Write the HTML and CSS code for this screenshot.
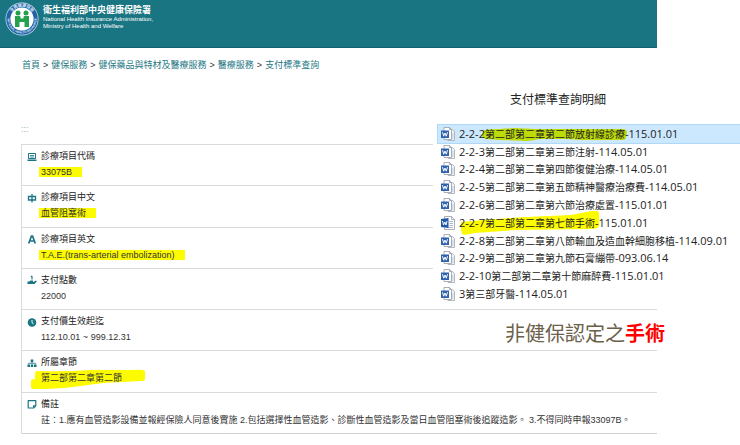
FILE: index.html
```html
<!DOCTYPE html>
<html lang="zh-Hant">
<head>
<meta charset="utf-8">
<meta name="viewport" content="width=device-width, initial-scale=1">
<title>支付標準查詢明細</title>
<link rel="stylesheet" href="styles.css">
</head>
<body>
<svg width="0" height="0" class="defs" aria-hidden="true">
  <symbol id="word-doc" viewBox="0 0 14 14">
    <path d="M7 2.500h4.500l2 2v9H7z" fill="#eef1f5" stroke="#a3a9b2" stroke-width=".8"/>
    <path d="M9.500 7h3M9.500 9h3M9.500 11h3" stroke="#b4bac4" stroke-width=".8"/>
    <path d="M3 .5h5.500l2 2v10H3z" fill="#fff" stroke="#949ca8" stroke-width=".8"/>
    <path d="M8.500.5v2h2" fill="none" stroke="#949ca8" stroke-width=".8"/>
    <path d="M0 3.500h8v7.500H0z" fill="#2f62ae"/>
    <path d="M1.500 5.200l1.200 4L4 6l1.300 3.200 1.200-4" fill="none" stroke="#fff" stroke-width="1"/>
  </symbol>
  <symbol id="word-page" viewBox="0 0 14 14">
    <path d="M3.500.5h7l3 3v10h-10z" fill="#fff" stroke="#949ca8" stroke-width=".8"/>
    <path d="M10.500.5v3h3M8.500 5.500h3.500M8.500 7.500h3.500M8.500 9.500h3.500M6 11.500h6" fill="none" stroke="#9aa5b8" stroke-width=".8"/>
    <path d="M0 3l7.500-1v10L0 11z" fill="#2259a8"/>
    <path d="M1.500 5l1 4L3.800 6 5 9l1-4" fill="none" stroke="#fff" stroke-width="1"/>
  </symbol>
</svg>

<div class="page">
  <header class="site-header">
    <svg class="logo" viewBox="0 0 34 34" aria-hidden="true">
      <defs>
        <path id="arc-top" d="M4.700 17a12.300 12.300 0 0 1 24.600 0"/>
        <path id="arc-bottom" d="M2.500 17a14.500 14.500 0 0 0 29 0"/>
      </defs>
      <circle cx="17" cy="17" r="16.500" fill="#d5e7f2"/>
      <circle cx="17" cy="17" r="15.800" fill="#2263a8"/>
      <circle cx="17" cy="17" r="11.600" fill="#fff"/>
      <text class="logo-text"><textPath href="#arc-top" startOffset="50%">全民健康保險</textPath></text>
      <text class="logo-text logo-text-en"><textPath href="#arc-bottom" startOffset="50%">NATIONAL HEALTH INSURANCE</textPath></text>
      <g fill="#25a04c">
        <circle cx="13" cy="11" r="2.500"/>
        <circle cx="21" cy="11" r="2.500"/>
        <path d="M10 14h4.500q1 0 1 1v1.500h3V15q0-1 1-1H24v11h-4.500v-5h-5v5H10z"/>
      </g>
    </svg>
    <div class="brand">
      <strong class="brand-zh">衛生福利部中央健康保險署</strong>
      <span class="brand-en">National Health Insurance Administration,<br>Ministry of Health and Welfare</span>
    </div>
  </header>

  <nav class="breadcrumb" aria-label="breadcrumb">
    <a href="#">首頁</a><span>&gt;</span><a href="#">健保服務</a><span>&gt;</span><a href="#">健保藥品與特材及醫療服務</a><span>&gt;</span><a href="#">醫療服務</a><span>&gt;</span><a href="#">支付標準查詢</a>
  </nav>

  <main class="content">
    <a class="accesskey" href="#">:::</a>
    <dl class="details">
      <div class="item">
        <svg class="icon" viewBox="0 0 10 10"><path d="M1.500 1.500h7v5h-7z" fill="none" stroke="currentColor"/><path d="M3 3.500h4M3 5h4" stroke="currentColor" stroke-width=".8"/><path d="M.5 7.500h9v1.500h-9z" fill="currentColor"/></svg>
        <dt>診療項目代碼</dt>
        <dd><mark class="mark">33075B</mark></dd>
      </div>
      <div class="item">
        <svg class="icon" viewBox="0 0 10 10"><path d="M1.500 3.500h7v3.500h-7zM5 1v8.500" fill="none" stroke="currentColor" stroke-width="1.300"/></svg>
        <dt>診療項目中文</dt>
        <dd><mark class="mark">血管阻塞術</mark></dd>
      </div>
      <div class="item">
        <svg class="icon" viewBox="0 0 10 10"><path d="M1.700 9.500L4.500 2h1L8.300 9.500M2.800 7h4.400" fill="none" stroke="currentColor" stroke-width="1.700"/></svg>
        <dt>診療項目英文</dt>
        <dd><mark class="mark">T.A.E.(trans-arterial embolization)</mark></dd>
      </div>
      <div class="item">
        <svg class="icon" viewBox="0 0 10 10"><path d="M5 1v3.500M4 1.800L5 1" fill="none" stroke="currentColor" stroke-width="1.100"/><path d="M.5 6.500h1.800L3.500 5.600h2.500v1.200H7l2-1.300.8.900L7.500 9h-7z" fill="currentColor"/></svg>
        <dt>支付點數</dt>
        <dd>22000</dd>
      </div>
      <div class="item">
        <svg class="icon" viewBox="0 0 10 10"><circle cx="5" cy="5.500" r="4.300" fill="currentColor"/><path d="M5 3v2.700l1.500 1" fill="none" stroke="#fff"/></svg>
        <dt>支付價生效起迄</dt>
        <dd>112.10.01 ~ 999.12.31</dd>
      </div>
      <div class="item">
        <svg class="icon" viewBox="0 0 10 10"><path d="M3.700 1.500h2.600V4H3.700zM.5 6.500h2.500V9H.5zM3.800 6.500h2.400V9H3.800zM7 6.500h2.500V9H7z" fill="currentColor"/><path d="M5 4v2.500M1.700 6.500V5.200h6.600v1.300" fill="none" stroke="currentColor" stroke-width=".8"/></svg>
        <dt>所屬章節</dt>
        <dd><span class="brushed">
          <svg class="brush brush-chapter" viewBox="0 0 116 20" preserveAspectRatio="none" aria-hidden="true"><path d="M6 2q26 1 56-1h42q12-1 11 2v7q0 2-4 2l-38 2-30 4q-18 2-39 2-3 0-3-2v-6q0-2 4-2V4z" fill="#fdfb00"/></svg>第二部第二章第二節</span></dd>
      </div>
      <div class="item">
        <svg class="icon" viewBox="0 0 10 10"><path d="M1.200 1.700h7.600v5.100L6.600 9H1.200z" fill="none" stroke="currentColor" stroke-width="1.200" stroke-linejoin="round"/><path d="M6 9V6.300h2.800z" fill="currentColor"/></svg>
        <dt>備註</dt>
        <dd>註：1.應有血管造影設備並報經保險人同意後實施 2.包括選擇性血管造影、診斷性血管造影及當日血管阻塞術後追蹤造影。 3.不得同時申報33097B。</dd>
      </div>
    </dl>
  </main>
</div>

<aside class="overlay">
  <h1 class="title">支付標準查詢明細</h1>
  <ul class="files">
    <li class="file file-selected"><svg class="doc"><use href="#word-doc"/></svg><span><b>2-2-2</b><span class="brushed"><svg class="brush brush-selected" viewBox="0 0 146 15" preserveAspectRatio="none" aria-hidden="true"><path d="M1 4q2-2 16-2l16-1 20 1h88q4 0 4 4l-1 5q-1 2-5 2H100l-16-1H58l-12 2-28-1-14-1q-4-1-4-4z" fill="#bddb09"/></svg>第二部第二章第二節放射線診療</span><b>-115.01.01</b></span></li>
    <li class="file"><svg class="doc"><use href="#word-doc"/></svg><span><b>2-2-3</b>第二部第二章第三節注射<b>-114.05.01</b></span></li>
    <li class="file"><svg class="doc"><use href="#word-doc"/></svg><span><b>2-2-4</b>第二部第二章第四節復健治療<b>-114.05.01</b></span></li>
    <li class="file"><svg class="doc"><use href="#word-doc"/></svg><span><b>2-2-5</b>第二部第二章第五節精神醫療治療費<b>-114.05.01</b></span></li>
    <li class="file"><svg class="doc"><use href="#word-doc"/></svg><span><b>2-2-6</b>第二部第二章第六節治療處置<b>-115.01.01</b></span></li>
    <li class="file"><svg class="doc"><use href="#word-page"/></svg><span><span class="brushed"><svg class="brush brush-surgery" viewBox="0 0 140 24" preserveAspectRatio="none" aria-hidden="true"><path d="M1 11q30-3 66-5l44-2 20-4q8-1 8 2v13q-1 3-8 3l-76 1-40 3-11 2q-3-1-3-6z" fill="#fdfb00"/></svg><b>2-2-7</b>第二部第二章第七節手術</span><b>-115.01.01</b></span></li>
    <li class="file"><svg class="doc"><use href="#word-doc"/></svg><span><b>2-2-8</b>第二部第二章第八節輸血及造血幹細胞移植<b>-114.09.01</b></span></li>
    <li class="file"><svg class="doc"><use href="#word-doc"/></svg><span><b>2-2-9</b>第二部第二章第九節石膏繃帶<b>-093.06.14</b></span></li>
    <li class="file"><svg class="doc"><use href="#word-doc"/></svg><span><b>2-2-10</b>第二部第二章第十節麻醉費<b>-115.01.01</b></span></li>
    <li class="file"><svg class="doc"><use href="#word-doc"/></svg><span><b>3</b>第三部牙醫<b>-114.05.01</b></span></li>
  </ul>
</aside>
<p class="callout">非健保認定之<strong>手術</strong></p>
</body>
</html>
```
FILE: styles.css
```css
* {
  box-sizing: border-box;
}

body {
  margin: 0;
  position: relative;
  background: #fff;
  color: #333;
  font-family: "Liberation Sans", "Noto Sans CJK TC", sans-serif;
  font-size: 9px;
}

a {
  color: #257783;
  text-decoration: none;
}

.defs {
  position: absolute;
}

.page {
  margin-right: 83px;
}

/* Header */
.site-header {
  display: flex;
  align-items: flex-start;
  gap: 4px;
  height: 48px;
  padding: 2px 5px;
  background: #1a7583;
  border-bottom: 1px solid #12616e;
  color: #fff;
}

.logo {
  width: 34px;
  height: 34px;
  flex: none;
}

.logo-text {
  fill: #d9e9f5;
  font-size: 4px;
  font-weight: 700;
  text-anchor: middle;
}

.logo-text-en {
  font-size: 3px;
}

.brand {
  display: flex;
  flex-direction: column;
  padding-top: 2px;
}

.brand-zh {
  font-size: 9px;
  line-height: 12px;
}

.brand-en {
  font-size: 6px;
  line-height: 7px;
}

/* Breadcrumb */
.breadcrumb {
  display: flex;
  gap: 3px;
  padding: 9px 22px 0;
  line-height: 16px;
}

/* Details */
.content {
  padding: 48px 0 0 21px;
}

.accesskey {
  display: block;
  padding-bottom: 7px;
  line-height: 16px;
  color: #8fb3bd;
}

.details {
  display: grid;
  grid-auto-rows: 1fr;
  min-height: 290px;
  margin: 0;
  border-left: 1px solid #d9dbdc;
  border-bottom: 1px solid #d0d2d3;
}

.item {
  display: grid;
  grid-template-columns: 10px 1fr;
  grid-template-rows: 15px 16px;
  column-gap: 4px;
  padding: 4px 0 4px 5px;
  border-top: 1px solid #d9dbdc;
}

.icon {
  width: 10px;
  height: 10px;
  align-self: center;
  color: #1a7583;
}

dt {
  color: #222;
  line-height: 15px;
}

dd {
  grid-column: 2;
  margin: 0;
  line-height: 16px;
  isolation: isolate;
}

.mark {
  margin-left: -2px;
  padding: 0 10px 0 2px;
  background: #fdfb00;
  color: #333;
}

/* Hand-drawn highlighter strokes behind text */
.brushed {
  position: relative;
}

.brush {
  position: absolute;
  z-index: -1;
}

.brush-chapter {
  left: -11px;
  top: -4px;
  width: 116px;
  height: 20px;
}

.brush-selected {
  left: -3px;
  top: 0;
  width: 146px;
  height: 15px;
}

.brush-surgery {
  left: 1px;
  top: -5px;
  width: 140px;
  height: 24px;
}

/* File list laid over the page */
.overlay {
  position: absolute;
  top: 90px;
  left: 433px;
  right: 0;
  background: #fff;
}

.title {
  width: 250px;
  margin: 0;
  padding-bottom: 15px;
  font-size: 12px;
  font-weight: 400;
  line-height: 20px;
  text-align: center;
  color: #222;
}

.files {
  display: grid;
  grid-auto-rows: 1fr;
  height: 178px;
  margin: 0;
  padding: 0 0 0 5px;
  list-style: none;
  font-family: "Open Sans", "Noto Sans CJK TC", sans-serif;
  font-size: 10px;
  line-height: 16px;
  white-space: nowrap;
  color: #222;
}

.file {
  display: flex;
  align-items: center;
  gap: 4px;
  padding-left: 3px;
  isolation: isolate;
}

.file b {
  font-size: 11px;
  font-weight: 400;
}

.file-selected {
  background: #cce8ff;
  box-shadow: 0 0 0 1px #b0d8f8;
}

.doc {
  width: 14px;
  height: 14px;
  flex: none;
}

.callout {
  position: absolute;
  top: 320px;
  left: 505px;
  margin: 0;
  font-size: 20px;
  line-height: 28px;
  color: #6b6049;
}

.callout strong {
  color: #f00;
}
```
